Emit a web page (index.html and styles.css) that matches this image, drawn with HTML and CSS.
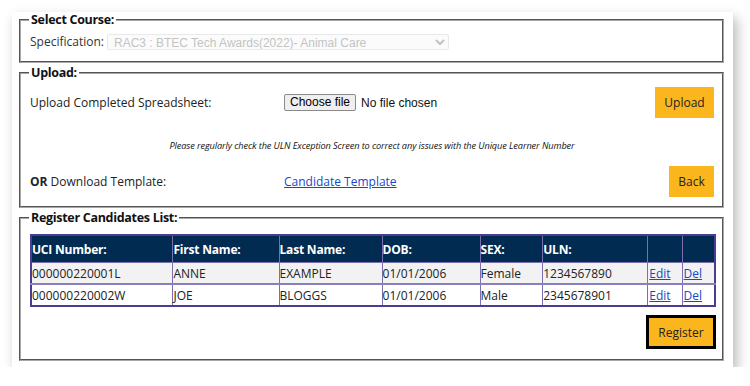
FILE: index.html
```html
<!DOCTYPE html>
<html lang="en">
  <head>
    <meta charset="UTF-8" />
    <meta name="viewport" content="width=device-width, initial-scale=1.0" />
    <title>Register Candidates</title>
    <link rel="stylesheet" href="styles.css">
  </head>
  <body>
    <div class="card">
      <!-- Selecao do curso -->
      <fieldset class="box box-course">
        <legend>Select Course:</legend>
        <div class="spec-row">
          <label for="spec">Specification:</label>
          <select id="spec" disabled>
            <option>RAC3 : BTEC Tech Awards(2022)- Animal Care</option>
          </select>
        </div>
      </fieldset>

      <!-- Upload -->
      <fieldset class="box box-upload">
        <legend>Upload:</legend>
        <div class="upload-row">
          <span class="row-label">Upload Completed Spreadsheet:</span>
          <label class="file-pick">
            <span class="file-btn">Choose file</span>
            <span class="file-name">No file chosen</span>
          </label>
          <button class="btn btn-upload" type="button">Upload</button>
        </div>
        <p class="note">Please regularly check the ULN Exception Screen to correct any issues with the Unique Learner Number</p>
        <div class="upload-row download-row">
          <span class="row-label"><b>OR</b> Download Template:</span>
          <a href="#" class="template-link">Candidate Template</a>
          <button class="btn btn-back" type="button">Back</button>
        </div>
      </fieldset>

      <!-- Lista de candidatos -->
      <fieldset class="box box-list">
        <legend>Register Candidates List:</legend>
        <table class="cand-table">
          <thead>
            <tr>
              <th class="c-uci">UCI Number:</th>
              <th class="c-first">First Name:</th>
              <th class="c-last">Last Name:</th>
              <th class="c-dob">DOB:</th>
              <th class="c-sex">SEX:</th>
              <th class="c-uln">ULN:</th>
              <th class="c-edit"></th>
              <th class="c-del"></th>
            </tr>
          </thead>
          <tbody>
            <tr>
              <td>000000220001L</td>
              <td>ANNE</td>
              <td>EXAMPLE</td>
              <td>01/01/2006</td>
              <td>Female</td>
              <td>1234567890</td>
              <td><a href="#">Edit</a></td>
              <td><a href="#">Del</a></td>
            </tr>
            <tr>
              <td>000000220002W</td>
              <td>JOE</td>
              <td>BLOGGS</td>
              <td>01/01/2006</td>
              <td>Male</td>
              <td>2345678901</td>
              <td><a href="#">Edit</a></td>
              <td><a href="#">Del</a></td>
            </tr>
          </tbody>
        </table>
        <div class="register-wrap">
          <button class="btn btn-register" type="button">Register</button>
        </div>
      </fieldset>
    </div>
  </body>
</html>
```

FILE: styles.css
```css
body {
  font-family: "Open Sans", Arial, sans-serif;
  font-size: 12px;
  color: #222;
  background-color: #fff;
  margin: 0;
  padding: 12px 0 0 12px;
}

.card {
  width: 721px;
  height: 355px;
  box-sizing: border-box;
  background-color: #fff;
  box-shadow: 4px 6px 12px rgba(0, 0, 0, 0.28);
  padding: 3px 9px 0 7px;
}

.box {
  margin: 0 0 5px 0;
  padding: 0 8px 0 9px;
  border: 2px groove #a8a8a8;
  box-sizing: border-box;
}

.box legend {
  font-weight: bold;
  font-size: 12.5px;
  padding: 0 2px;
  margin-left: -1px;
  letter-spacing: -0.3px;
  color: #111;
  line-height: 10px;
}

/* Select Course */
.box-course {
  height: 48px;
}

.spec-row {
  display: flex;
  align-items: center;
  margin-top: 8px;
  gap: 3px;
}

.spec-row label {
  color: #333;
}

.spec-row select {
  width: 342px;
  height: 16px;
  font-family: "Liberation Sans", Arial, sans-serif;
  font-size: 12px;
  color: #aaa;
  background-color: #fafafa;
  border: 1px solid #e0e0e0;
  border-radius: 2px;
  padding: 0 2px;
}

/* Upload */
.box-upload {
  height: 140px;
}

.upload-row {
  display: flex;
  align-items: center;
  margin-top: 9px;
  height: 31px;
}

.row-label {
  width: 254px;
  color: #222;
}

.file-pick {
  flex: 1;
  display: flex;
  align-items: center;
  gap: 5px;
  font-family: "Liberation Sans", Arial, sans-serif;
  font-size: 12px;
}

.file-btn {
  display: inline-block;
  height: 15px;
  line-height: 15px;
  padding: 0 5px;
  border: 1px solid #8a8a8a;
  border-radius: 2px;
  background-color: #efefef;
  color: #000;
  cursor: pointer;
}

.file-name {
  color: #111;
}

.template-link {
  flex: 1;
  color: #1a47c9;
}

.note {
  margin: 22px 0 0 0;
  text-align: center;
  font-style: italic;
  font-size: 9.2px;
  line-height: 12px;
  letter-spacing: -0.1px;
  color: #111;
}

.download-row {
  margin-top: 14px;
}

.btn {
  font-family: "Open Sans", Arial, sans-serif;
  font-size: 12px;
  background-color: #fbb51d;
  color: #222;
  border: none;
  cursor: pointer;
  height: 31px;
}

.btn-upload {
  width: 59px;
}

.btn-back {
  width: 45px;
}

/* Lista */
.box-list {
  height: 148px;
  margin-bottom: 0;
  padding-right: 6px;
}

.cand-table {
  width: 686px;
  border-collapse: collapse;
  border: 2px solid #4b3c91;
  margin-top: 11px;
}

.cand-table th,
.cand-table td {
  border: 1px solid #7b6fb0;
  text-align: left;
  padding: 0;
  height: 20px;
}

.cand-table th {
  background-color: #022b52;
  color: #fff;
  font-weight: bold;
  height: 26px;
  letter-spacing: -0.2px;
}

.cand-table tbody tr:first-child td {
  background-color: #f2f2f2;
  border-bottom: 2px solid #8a7fbd;
}

.cand-table td a {
  color: #1a47c9;
  padding-left: 1px;
}

.c-uci { width: 139px; }
.c-first { width: 104px; }
.c-last { width: 101px; }
.c-dob { width: 96px; }
.c-sex { width: 61px; }
.c-uln { width: 103px; }
.c-edit { width: 33px; }
.c-del { width: 31px; }

.register-wrap {
  display: flex;
  justify-content: flex-end;
  margin-top: 8px;
}

.btn-register {
  width: 70px;
  height: 34px;
  border: 3px solid #000;
}
```
